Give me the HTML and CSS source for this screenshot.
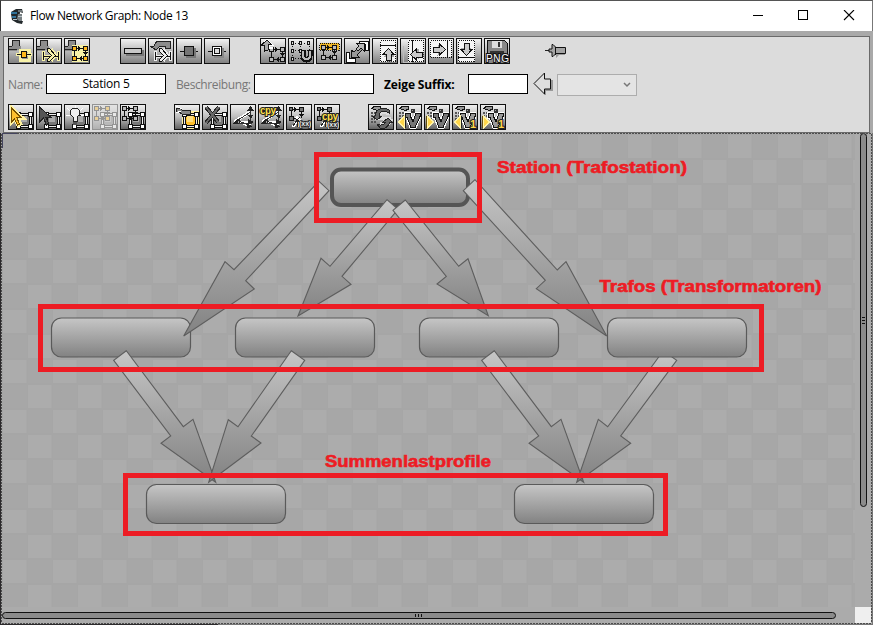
FILE: index.html
```
<!DOCTYPE html>
<html lang="de">
<head>
<meta charset="utf-8">
<title>Flow Network Graph: Node 13</title>
<link rel="stylesheet" href="styles.css">
</head>
<body>
<svg class="defs" width="0" height="0">
  <defs>
    <linearGradient id="shade" x1="0" y1="0" x2="0" y2="1"><stop offset="0" stop-color="#c6c6c6"/><stop offset="1" stop-color="#828282"/></linearGradient>
    <pattern id="tiles" x="2" y="0" width="50" height="50" patternUnits="userSpaceOnUse">
      <rect width="50" height="50" fill="#a6a6a6"/>
      <rect x="26" y="1" width="23.5" height="23" fill="#acacac"/><rect x="1" y="26" width="23.5" height="23" fill="#acacac"/>
      <rect x="1" y="1" width="24" height="23" fill="#a7a7a7"/><rect x="26" y="26" width="24" height="23" fill="#a7a7a7"/>
    </pattern>
    <symbol id="plus" viewBox="0 0 24 24"><path d="M0 10V7h3V1h7v6h2v4H8v1H0z" fill="#8d8d8d"/><path d="M0 10.500h8M3.500 7V1.500h7V7M0 7.500h3" fill="none" stroke="#222"/></symbol>
    <symbol id="frame" viewBox="0 0 24 24">
      <rect x="11" y="10" width="10" height="10" fill="var(--box,#777)"/><rect x="12" y="11" width="6" height="6" fill="var(--shine,#aaa)"/>
      <path d="M9.500 9.500h12v12h-12z" fill="none" stroke="#111" stroke-width="3"/>
      <path d="M9.500 9.500h12v12h-12z" fill="none" stroke="#eee"/>
      <path d="M7 7h5v5H7zM19 7h5v5h-5zM7 19h5v5H7zM19 19h5v5h-5z" fill="#111"/><path d="M8 8h3v3H8zM20 8h3v3h-3zM8 20h3v3H8zM20 20h3v3h-3z" fill="#fff"/>
    </symbol>
    <symbol id="net" viewBox="0 0 24 24">
      <path d="M4 5.500h12M4 15.500h12M4.500 5v10M15.500 5v10" stroke="#111"/><path d="M8 3l4 2.500L8 8zM12 13l-4 2.500 4 2.500zM13 9h5l-2.500 4z" fill="#111"/>
      <path d="M2.500 3.500h4v4h-4zM13.500 3.500h4v4h-4zM2.500 13.500h4v4h-4zM13.500 13.500h4v4h-4z" fill="var(--node,#bbb)" stroke="#111"/>
    </symbol>
    <symbol id="smallnet" viewBox="0 0 24 24">
      <path d="M4 4.500h10M4.500 4v9M14.500 4v9M4 13.500h6" stroke="#111"/><path d="M7 2l4 2.500L7 7zM12 9h5l-2.500 3z" fill="#111"/>
      <path d="M2.500 2.500h3v3h-3zM12.500 2.500h4v4h-4zM2.500 11.500h4v4h-4z" fill="#777" stroke="#111"/>
      <path d="M9 12l3 3M10 17l3-3M6 22l4-6M11 16v6" stroke="#fff" stroke-width="3"/><path d="M6 21l4-6 3-3M8 13l7 6M10.500 15v7" stroke="#222"/>
    </symbol>
    <symbol id="fork" viewBox="0 0 24 24"><path d="M6.500 12v10M6.500 17h16M21.500 12v10M11 9l5 7.500-5 6.500M14 10l5 6.500-5 5.500" fill="none" stroke="var(--halo,#eee)" stroke-width="3"/><path d="M6.500 13v8M6 17.500h16M21.500 13v8" stroke="#111" fill="none"/><path d="M10.500 9.500h2l6 7-6 6h-2v-2l4-4-4-4z" fill="var(--halo,#eee)" stroke="#111"/></symbol>
    <symbol id="calc" viewBox="0 0 24 24"><path d="M2.500 3.500L5 1.500h6v3l-3 1z" fill="#999" stroke="#111"/><path d="M2 7h2v2H2zM5 7h2v2H5zM8 7h2v2H8zM2 10h2v2H2zM5 10h2v2H5zM8 10h2v2H8zM2 13h2v2H2zM5 13h2v2H5zM2 16h2v2H2zM5 16h2v2H5z" fill="#555"/></symbol>
    <symbol id="vee" viewBox="0 0 24 24"><path d="M8.500 8.500h5v3l2.500 5 3-8h4v3L18 22.500h-4L10 12H8.500z" fill="none" stroke="#fff" stroke-width="3"/><path d="M8.500 8.500h5v3l2.500 5 3-8h4v3L18 22.500h-4L10 12H8.500z" fill="var(--v,#777)" stroke="#111"/><rect x="14" y="4" width="4" height="4" fill="#333"/><rect x="15" y="5" width="1" height="1" fill="#999"/></symbol>
    <symbol id="tri-l" viewBox="0 0 24 24"><path d="M7.500 11v12L1.500 17z" fill="#ffd64a" stroke="#fff3a8"/><path d="M8.500 11v12" stroke="#222"/></symbol>
    <symbol id="tri-r" viewBox="0 0 24 24"><path d="M2.500 11v12L8.500 17z" fill="#ffd64a" stroke="#fff3a8"/><path d="M1.500 11v12" stroke="#655010"/></symbol>
    <symbol id="vectors" viewBox="0 0 24 24"><path d="M3 17L19 7M3 18l18-1M12 18l8 3" stroke="#fff" stroke-width="3"/><path d="M4 17L19.500 7M4 18h17M10 17l10 4M19.500 4v11" stroke="#333"/><path d="M19.500 1l3.500 5h-7zM17 10h5l-2 4zM23 17l-6-3v5zM22 22l-6-4v5zM1 19l6-5 3 2-2 3z" fill="#222"/><path d="M5 17l3-1v2z" fill="#aaa"/></symbol>
    <symbol id="page" viewBox="0 0 24 24"><path d="M7 1h16v22H7z" fill="#f5f5f5"/><path d="M7.500 1.500h15v21h-15z" fill="none" stroke="#111" stroke-dasharray="1 1"/></symbol>
    <symbol id="up" viewBox="0 0 24 24"><path d="M16.500 11.500l5 6h-3v5h-5v-5h-3z" fill="#555" opacity=".5"/><path d="M15.500 9.500l5.500 6h-3v6h-5v-6h-3z" fill="#c9c9c9" stroke="#111"/></symbol>
  </defs>
</svg>
<main class="window">
  <header class="titlebar">
    <svg class="appicon" width="14" height="16" viewBox="0 0 14 16"><path d="M1 4L6 1l6 0 1 4-3-1-1 9 4 0-1 3-5-1-5-3-1-6z" fill="#22282b"/><path d="M1 4h6v2H1zM2 8h4v2H2z" fill="#31739a"/><path d="M8 6h4v7H9l-2-2z" fill="#777f82"/><path d="M8 3h4M3 11.500h4M8 8.500h4" stroke="#b7c2c6"/></svg>
    <h1>Flow Network Graph: Node 13</h1>
    <svg class="controls" width="102" height="12" viewBox="0 0 102 12"><path d="M0 5.500h10M45.500.5h9v9h-9z" fill="none" stroke="#000" shape-rendering="crispEdges"/><path d="M91 0l10 10M101 0L91 10" stroke="#000" stroke-width="1.100"/></svg>
  </header>
  <section class="panel">
    <div class="row tools">
      <div class="group warm">
        <svg class="btn"><use href="#plus"/><path d="M7 15.500h16M11 11h9v10h-9z" stroke="#f7f2a8" stroke-width="3" fill="none"/><path d="M8 15.500h14" stroke="#111"/><path d="M12.500 12.500h5v6h-5z" fill="#ffb91c" stroke="#111"/></svg>
        <svg class="btn"><use href="#plus"/><use href="#fork"/></svg>
        <svg class="btn"><use href="#plus"/><path d="M7 6h16v17H7z" fill="#f7f2a8"/><use href="#net" x="5" y="4"/></svg>
      </div>
      <div class="group">
        <svg class="btn"><path d="M5 16h17v-5" fill="none" stroke="#777" stroke-width="2"/><path d="M3.500 9.500h17v5h-17z" fill="#c8c8c8" stroke="#111"/></svg>
        <svg class="btn"><path d="M1 7h4l3-5h13v7h-5V7h-5l-4 4z" fill="#8c8c8c" stroke="#222"/><use href="#fork"/></svg>
        <svg class="btn"><path d="M3 12.500h18" stroke="#111"/><path d="M9 18h9V9" fill="none" stroke="#777" stroke-width="2"/><path d="M7.500 7.500h9v9h-9z" fill="#757575" stroke="#111"/></svg>
        <svg class="btn"><path d="M3 12.500h18" stroke="#111"/><path d="M9 18h9V9" fill="none" stroke="#888" stroke-width="2"/><path d="M7.500 7.500h9v9h-9z" fill="#fff" stroke="#111"/><path d="M9.500 9.500h5v5h-5z" fill="#ddd" stroke="#111"/></svg>
      </div>
      <div class="group">
        <svg class="btn"><use href="#net" x="6" y="5"/><path d="M4 12V6H1l5-5 5 5H8v3h4" fill="#aaa" stroke="#fff" stroke-width="2"/><path d="M3.500 12V6H.5L6 1l4 4H7v6z" fill="#aaa" stroke="#111"/></svg>
        <svg class="btn"><path d="M3 4.500h17M3 11.500h17M3 19.500h10M3.500 4v16M11.500 4v16M20.500 4v8" fill="none" stroke="#111" stroke-dasharray="1 2"/><path d="M2.500 2.500h2v3h-2zM10.500 2.500h2v3h-2zM18.500 2.500h2v3h-2zM2.500 10.500h2v3h-2zM10.500 10.500h2v3h-2zM2.500 18.500h2v3h-2z" fill="#ddd" stroke="#111"/><path d="M14 11v6q0 4 3.500 4t3.500-4v-6" fill="none" stroke="#111" stroke-width="5"/><path d="M14 12v5q0 3 3.500 3t3.500-3v-5" fill="none" stroke="#bbb" stroke-width="2"/></svg>
        <svg class="btn"><rect x="3" y="4" width="19" height="7" fill="#f0b72a"/><path d="M2.500 4.500h20v7h-20z" fill="none" stroke="#111" stroke-dasharray="1 1"/><use href="#net" x="2" y="3"/></svg>
        <svg class="btn"><path d="M14 2h9v9h-3V5h-6zM1 13h3v6h6v4H1z" fill="#fff" stroke="#111"/><path d="M8 12l7-7 3 3-7 7 2 2H5v-7z" fill="#999" stroke="#111" transform="translate(1 1)"/><path d="M19 4v8l-3-3-3 3-2-2 3-3-3-3z" fill="#bbb" stroke="#111"/></svg>
        <svg class="btn"><use href="#page"/><path d="M7 6.500h16" stroke="#111"/><use href="#up"/></svg>
        <svg class="btn"><use href="#page"/><path d="M11.500 1v22" stroke="#111"/><path d="M2.500 7v16H11" fill="none" stroke="#bbb"/><g transform="translate(0 31) rotate(-90)"><use href="#up"/></g></svg>
        <svg class="btn"><path d="M1 1h22v17H1z" fill="#f5f5f5"/><path d="M1.500 1.500h21v17h-21z" fill="none" stroke="#111" stroke-dasharray="1 1"/><path d="M18.500 1v17" stroke="#111"/><g transform="translate(26 -5) rotate(90)"><use href="#up"/></g></svg>
        <svg class="btn"><path d="M1 1h17v22H1z" fill="#f5f5f5"/><path d="M1.500 1.500h16v21h-16z" fill="none" stroke="#111" stroke-dasharray="1 1"/><path d="M1 18.500h17" stroke="#111"/><g transform="translate(25 26) rotate(180)"><use href="#up"/></g></svg>
        <svg class="btn"><path d="M2.500 1.500h17l3 3v13h-20z" fill="#888" stroke="#111"/><path d="M7 2h10v7H7z" fill="#ddd"/><path d="M13 3h2v5h-2zM5 12h14v5H5z" fill="#333"/><text class="png" x="1" y="23" textLength="23">PNG</text></svg>
      </div>
      <svg class="pin" width="22" height="18" viewBox="0 0 22 18"><path d="M3 11h8v5l3-3h6v-3" fill="#999"/><path d="M0 8.500h7" stroke="#222"/><path d="M4 7l3 0V2.500h1l3 3h9.500v6H11l-3 3H7V10H4z" fill="#a4a4a4" stroke="#111"/><path d="M10.500 5v8" stroke="#111"/></svg>
    </div>
    <div class="row fields">
      <label class="name">Name:</label><div class="input">Station 5</div>
      <label class="desc">Beschreibung:</label><div class="input"></div>
      <label class="suffix">Zeige Suffix:</label><div class="input small"></div>
      <svg class="back" width="20" height="24" viewBox="0 0 20 24"><path d="M12 23V18h7V8" fill="none" stroke="#999" stroke-width="2"/><path d="M1 11.500L11.500 1v6h6v10h-6v5z" fill="#dedede" stroke="#111"/></svg>
      <div class="select"><svg width="8" height="6" viewBox="0 0 8 6"><path d="M1 1l3 3 3-3" fill="none" stroke="#777" stroke-width="1.500"/></svg></div>
    </div>
    <div class="row tools">
      <div class="group dark">
        <svg class="btn"><use href="#frame"/><path d="M2 2v16l4-4 3 7 3-2-3-6h5z" fill="#ffc12d" stroke="#fff3a0" stroke-width="3"/><path d="M2.500 3v14l3-3 3 6 2-1-3-7h4z" fill="#ffc12d" stroke="#765000" stroke-width="1"/></svg>
        <svg class="btn"><use href="#frame"/><path d="M2.500 2v15l4-4 3 7 2-2-3-6h5z" fill="#555" stroke="#222"/></svg>
        <svg class="btn"><use href="#frame"/><path d="M2 3l3 3M10 0v3M18 3l-3 3M1 10h4M16 10h3" stroke="#fff"/><path d="M8 16v-4q-3-2-3-5 1-4 5-4t5 4q0 3-3 5v4z" fill="#eee" stroke="#222"/><path d="M8 17h4v3H8z" fill="#555"/></svg>
        <svg class="btn off warm"><use href="#frame"/><use href="#net" x="-1" y="-2"/></svg>
        <svg class="btn"><use href="#frame"/><use href="#net" x="-1" y="-2"/></svg>
      </div>
      <div class="group dark">
        <svg class="btn gold"><path d="M7 6h17v18H7z" fill="#fff0a0"/><use href="#frame"/><path d="M1 3h4l2 2h8v4H7L4 7H1z" fill="#888" stroke="#222"/><path d="M1 1l6 3M1 8l5-2" stroke="#fff"/></svg>
        <svg class="btn"><use href="#frame"/><path d="M3 2l12 15M16 2L3 18" stroke="#222" stroke-width="4"/><path d="M3 2l12 15M16 2L3 18" stroke="#666" stroke-width="2"/></svg>
        <svg class="btn"><use href="#vectors"/></svg>
        <svg class="btn"><use href="#vectors"/><text class="cpy" x="1" y="9" textLength="16">cpy</text></svg>
        <svg class="btn"><use href="#smallnet"/><text class="wave" x="12" y="21">(xx)</text></svg>
        <svg class="btn"><use href="#smallnet"/><text class="cpy" x="7" y="15" textLength="16">cpy</text><text class="wave" x="12" y="22">(xx)</text></svg>
      </div>
      <div class="group dark">
        <svg class="btn"><use href="#calc"/><path d="M20 9q-6-5-11 1v3M6 13h8M22 14q-2 8-11 5M14 14h8" fill="none" stroke="#ddd" stroke-width="4"/><path d="M20 8q-6-4-10 1v2h3l-5 4-5-4h3q1-8 10-8l4 2zM8 19q5 3 9-2h-3l5-4 4 4h-2q-3 8-10 6z" fill="#666" stroke="#222"/></svg>
        <svg class="btn"><use href="#calc"/><use href="#vee"/><use href="#tri-l"/></svg>
        <svg class="btn"><use href="#calc"/><use href="#vee"/><use href="#tri-r"/></svg>
        <svg class="btn pale"><use href="#calc"/><use href="#vee" x="-1"/><use href="#tri-l"/><text class="one" x="17" y="23">1</text></svg>
        <svg class="btn pale"><use href="#calc"/><use href="#vee" x="-1"/><use href="#tri-r"/><text class="one" x="17" y="23">1</text></svg>
      </div>
    </div>
  </section>
  <svg class="graph" width="873" height="492" viewBox="0 133 873 492">
    <rect x="0" y="133" width="873" height="492" fill="#ababab"/>
    <g transform="translate(0 134)"><rect x="2" y="0" width="853" height="473" fill="url(#tiles)"/></g>
    <g class="node">
      <rect x="332" y="169.500" width="136" height="35.500" rx="9" class="selected"/>
      <rect x="51.500" y="318" width="139" height="39" rx="10"/><rect x="235.500" y="318" width="139" height="39" rx="10"/><rect x="419.500" y="318" width="139" height="39" rx="10"/>
      <rect x="146.500" y="484.500" width="139" height="39" rx="10"/><rect x="514.500" y="484.500" width="139" height="39" rx="10"/>
    </g>
    <g class="arrow">
      <path d="M319 181.300L329 190.700 245.700 280.700 254.300 289 183.700 336 225 261.700 234 269.700z"/>
      <path d="M387 199.700L398 209.300 342 276.300 351 284.300 298 316 321 258.300 330 266.300z"/>
      <path d="M405.300 200L393 210.300 446.300 276.300 437 284 488.300 315.700 468 258.700 458.700 266.300z"/>
      <path d="M475 179.700L463.300 190.700 545.300 280.300 536.300 288.700 606.700 336 566 261.700 557.300 270z"/>
      <path d="M126.300 350.700L113.700 360.300 170.700 436 161 443.300 215.700 482.300 193 419.300 183.300 426.700z"/>
      <path d="M291.300 350.700L304.700 360.300 251.300 436 261 443 208.700 482.300 228.300 419.700 238 426.700z"/>
      <path d="M494.300 350.700L481.700 360.300 538.700 436 529 443.300 583.700 482.300 561 419.300 551.300 426.700z"/>
      <path d="M663.300 350.700L676.700 360.300 620.700 436 630.700 443.300 576.700 482.300 598.300 419.300 607.700 426.700z"/>
    </g>
    <g class="node"><rect x="607.500" y="318" width="139" height="39" rx="10"/></g>
    <g class="mark"><rect x="316.500" y="154.500" width="163" height="66"/><rect x="40.500" y="306.500" width="721" height="63"/><rect x="125.500" y="475.500" width="540" height="58"/></g>
    <g class="note"><text x="497" y="173" textLength="190" lengthAdjust="spacingAndGlyphs">Station (Trafostation)</text><text x="599.500" y="292" textLength="222" lengthAdjust="spacingAndGlyphs">Trafos (Transformatoren)</text><text x="325" y="467" textLength="166" lengthAdjust="spacingAndGlyphs">Summenlastprofile</text></g>
    <g class="bar"><rect x="860.500" y="133.500" width="6" height="373" rx="3"/><rect x="2.500" y="612.500" width="833" height="6" rx="3"/></g>
    <path d="M862 317.500h3M862 320.500h3M862 323.500h3M415.500 614v3M418.500 614v3M421.500 614v3" stroke="#111"/>
    <rect x="855" y="607" width="16" height="16" fill="#efefef"/>
    <path d="M2 133.500h869M1.500 134v489M2 623.500h869M871.500 134v489" fill="none" stroke="#4d4d4d" stroke-dasharray="2 1"/>
    <path d="M2 133.500h15M2.500 134v14" stroke="#44445e"/>
    <path d="M0 624.500h873M872.500 133v492" stroke="#777"/><path d="M.5 133v492M0 624.500h218" stroke="#2b292b"/>
  </svg>
</main>
</body>
</html>
```
FILE: styles.css
```
* { box-sizing: border-box; }
body { margin: 0; overflow: hidden; font-family: "Open Sans", "Noto Sans", sans-serif; }
.defs { display: block; height: 0; }
.window { width: 873px; height: 625px; background: #a9a9a9; display: flex; flex-direction: column; }
.titlebar { height: 31px; flex: none; background: #fff; border-top: 1px solid #555; border-left: 1px solid #333; border-right: 1px solid #777; display: flex; align-items: center; padding: 0 17px 0 9px; }
.titlebar h1 { margin: 0 auto 1px 6px; font-size: 12px; font-weight: 400; letter-spacing: -.38px; color: #000; }
.controls { display: block; }
.panel { height: 97px; flex: none; margin: 5px 3px 0; background: #dcdcdc; border: 1px solid #6a6a6a; padding: 1px 4px 0; }
.row { display: flex; }
.tools { height: 26px; gap: 30px; }
.tools + .fields { margin-top: 10px; }
.fields + .tools { gap: 28px; margin-top: 6px; }
.group { display: flex; gap: 2px; }
.btn { display: block; width: 26px; height: 26px; border: 1px solid #111; background: linear-gradient(#f2f2f2, #b4b4b4 55%, #818181); overflow: hidden; shape-rendering: crispEdges; }
.dark .btn { background: linear-gradient(#f0f0f0, #bdbdbd 50%, #636363); }
.btn use { width: 24px; height: 24px; }
.warm { --node: #ffb91c; --halo: #f7f2a8; }
.gold { --box: #ffc02c; --shine: #ffdf80; }
.dark .off { opacity: .35; }
.pale { --v: #999; }
.png, .cpy, .wave, .one { font-family: "Liberation Sans", sans-serif; font-weight: 700; paint-order: stroke; }
.png { font-size: 10px; font-weight: 400; fill: #fff; stroke: #111; stroke-width: 2px; }
.cpy { font-size: 10px; fill: #ffe04a; stroke: #222; stroke-width: 2px; }
.wave { font-size: 7px; fill: #eee; stroke: #222; stroke-width: 1.5px; }
.one { font-size: 11px; fill: #ffd64a; stroke: #222; stroke-width: 2px; }
.pin { margin: 4px 0 0 5px; }
.fields { height: 24px; align-items: flex-start; font-size: 12px; line-height: 21px; }
.fields label { color: #777; white-space: nowrap; flex: none; }
.name { width: 38px; letter-spacing: -.4px; }
.desc { width: 78px; margin-left: 10px; letter-spacing: -.4px; }
.fields .suffix { width: 84px; margin-left: 10px; color: #000; font-weight: 700; letter-spacing: -.15px; }
.input { width: 120px; height: 20px; flex: none; border: 1px solid #000; background: #fff; text-align: center; line-height: 18px; letter-spacing: -.25px; }
.small { width: 60px; }
.back { margin: -2px 4px 0 5px; }
.select { width: 80px; height: 22px; border: 1px solid #adadad; background: #e4e4e4; display: flex; align-items: center; justify-content: flex-end; padding-right: 5px; }
.graph { display: block; flex: none; }
.node rect { fill: url(#shade); stroke: #5a5a5a; stroke-width: 1.2px; }
.node .selected { stroke: #555; stroke-width: 4px; }
.arrow path { fill: url(#shade); stroke: #5e5e5e; stroke-width: 1.1px; }
.mark rect { fill: none; stroke: #ed1c24; stroke-width: 5px; }
.note text { font: 700 16px "Liberation Sans", Arial, sans-serif; fill: #ed1c24; stroke: #ed1c24; stroke-width: .6px; }
.bar rect { fill: #8b8b8b; stroke: #111; }
```
